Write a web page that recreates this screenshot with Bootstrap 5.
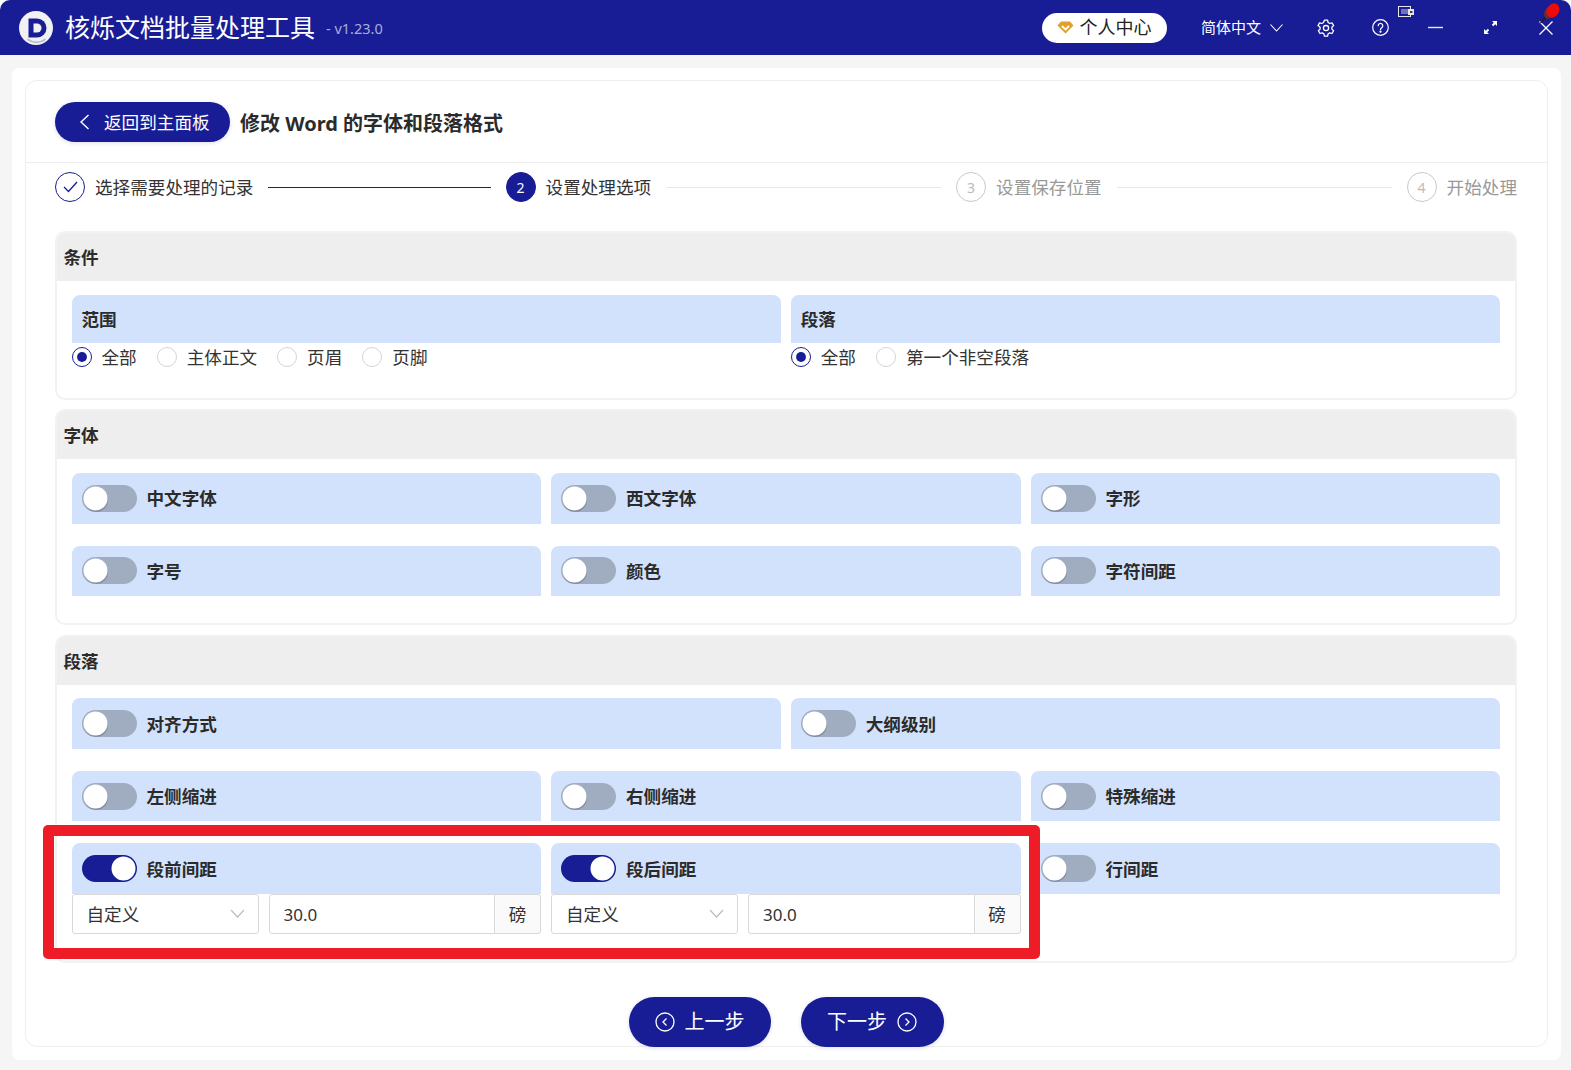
<!DOCTYPE html>
<html lang="zh-CN">
<head>
<meta charset="utf-8">
<title>核烁文档批量处理工具</title>
<link href="https://cdn.jsdelivr.net/npm/bootstrap@5.3.0/dist/css/bootstrap.min.css" rel="stylesheet">
<style>
:root{--navy:#181d96;--sky:#d2e2fc;}
html,body{height:1070px;}
body{position:relative;width:1571px;overflow:hidden;background:#fff;font-family:"Noto Sans","Noto Sans CJK SC",sans-serif;font-size:17.6px;color:#333;}
.app-bar{height:55px;background:var(--navy);color:#fff;border-radius:10px 10px 0 0;padding:0 18px 0 19px;}
.app-title{font-size:25px;margin-left:12px;line-height:55px;}
.app-ver{font-size:14.5px;color:#a9add6;margin-left:11px;padding-top:2px;}
.vip-pill{width:125px;height:30px;background:#fff;color:#222;border-radius:15px;font-size:18px;gap:5px;}
.lang-txt{font-size:15px;margin-left:34px;margin-right:9px;}
.ic-gear{margin-left:34px;}.ic-help{margin-left:37px;}.ic-min{margin-left:39px;}.ic-exp{margin-left:41px;}.ic-x{margin-left:42px;}
.tray-ic{position:absolute;left:1398px;top:6px;}
.pin-ic{position:absolute;left:1539px;top:2px;}
.page-wrap{background:#f5f5f5;height:1015px;padding:13px 10px 0 12px;}
.sheet{background:#fff;height:992px;border-radius:8px;padding:12px 13px 0 13px;}
.inner-sheet{height:967px;border:1px solid #eee;border-radius:12px;}
.top-row{height:82px;border-bottom:1px solid #eee;padding:21px 0 0 29px;}
.btn-navy{background:var(--navy);color:#fff;border:0;border-radius:25px;box-shadow:0 1px 4px rgba(24,29,150,.15);}
.btn-navy:hover{background:var(--navy);color:#fff;}
.btn-home{width:175px;height:40px;font-size:17.6px;gap:14px;padding:0 0 0 24px;}
.page-head{font-size:20px;font-weight:700;color:#2b2b2b;margin-left:10px;height:44px;}
.steps{padding:9px 0 0 29px;margin-right:30px;height:39px;margin-bottom:29px;}
.step-it{flex:1 1 0;}
.step-it.end{flex:0 0 auto;}
.step-no{width:30px;height:30px;border-radius:50%;border:1px solid #c9c9c9;color:#bbb;font-size:14px;flex:none;margin-right:10px;}
.step-no.done{border-color:var(--navy);}
.step-no.now{background:var(--navy);border-color:var(--navy);color:#fff;}
.step-txt{color:#333;white-space:nowrap;}
.step-txt.todo{color:#999;}
.step-line{flex:1;height:1px;background:#e8e8e8;margin:0 15px;}
.step-line.on{background:var(--navy);}
.sect{margin:0 30px 10px 28.5px;border:2px solid #f2f2f2;border-radius:10px;overflow:hidden;}
.sect.first{margin-bottom:9px;}
.sect-head{background:#eee;height:48px;line-height:48px;padding-left:7px;font-weight:700;color:#2b2b2b;}
.sect-body{padding:14px 15px 0;}
.sect-body.snug{padding-top:13px;}
.snug .cell-head{padding-top:1px;}
.tight{--bs-gutter-x:10px;--bs-gutter-y:0;}
.cell-head{background:var(--sky);border-radius:8px 8px 0 0;height:50.5px;padding-left:10px;gap:10px;font-weight:700;color:#2b2b2b;}
.cell-head.short{height:48px;}
.row-gap{margin-top:22px;}
.opts{height:28px;}
.form-check.opt{display:flex;align-items:center;padding:0;margin:0 20px 0 0;min-height:0;}
.form-check.opt .form-check-input{float:none;margin:0 10px 0 0;width:20px;height:20px;border:1px solid #d4d4d4;}
.form-check.opt .form-check-input:checked{background-color:#fff;border-color:var(--navy);background-size:100% 100%;background-image:url("data:image/svg+xml,%3csvg xmlns='http://www.w3.org/2000/svg' viewBox='0 0 20 20'%3e%3ccircle cx='10' cy='10' r='5.5' fill='%23181d96'/%3e%3c/svg%3e");}
.form-check.opt label{color:#333;}
.form-switch.tg{padding:0;margin:0;min-height:0;display:flex;}
.form-switch.tg .form-check-input.tog{float:none;margin:0;width:55px;height:27px;border:0;border-radius:14px;background-color:#a0adc0;background-size:100% 100%;background-position:0 0;background-image:url("data:image/svg+xml,%3csvg xmlns='http://www.w3.org/2000/svg' viewBox='0 0 55 27'%3e%3ccircle cx='14' cy='15' r='12' fill='%23000' fill-opacity='.18'/%3e%3ccircle cx='13.5' cy='13.5' r='12' fill='%23fff'/%3e%3c/svg%3e");}
.form-switch.tg .form-check-input.tog:checked{background-color:var(--navy);background-image:url("data:image/svg+xml,%3csvg xmlns='http://www.w3.org/2000/svg' viewBox='0 0 55 27'%3e%3ccircle cx='41.5' cy='13.5' r='12' fill='%23fff'/%3e%3c/svg%3e");}
.field-row{gap:10px;height:40px;}
.pick{flex:0 0 187px;width:187px;height:40px;border:1px solid #d9d9d9;border-radius:3px;font-size:17.6px;color:#333;padding:2px 30px 0 14px;background-size:15px 9px;background-position:right 13px center;background-image:url("data:image/svg+xml,%3csvg xmlns='http://www.w3.org/2000/svg' viewBox='0 0 15 9'%3e%3cpath d='M1 1l6.5 7L14 1' fill='none' stroke='%23bdbdbd' stroke-width='1.2'/%3e%3c/svg%3e");}
.num-group{flex:1;min-width:0;height:40px;}
.num-group .form-control{height:40px;border:1px solid #d9d9d9;border-radius:3px 0 0 3px;font-size:17px;color:#333;padding:2px 14px 0;}
.num-group .input-group-text{width:47px;justify-content:center;background:#fafafa;border:1px solid #d9d9d9;border-radius:0 3px 3px 0;font-size:17.6px;color:#333;padding:2px 0 0;}
.pb-a{padding-bottom:27px;}.pb-b{padding-bottom:27px;}
.bottom-nav{gap:30px;margin-top:34px;padding-right:1px;}
.btn-step{height:50px;font-size:20px;gap:10px;padding:0;}
.w-a{width:142px;}.w-b{width:143px;}
.red-box{position:absolute;left:43px;top:825px;width:997px;height:134px;border:11px solid #ee1c27;border-radius:5px;pointer-events:none;}
</style>
</head>
<body>
<header class="app-bar d-flex align-items-center">
  <svg width="34" height="34" viewBox="0 0 34 34"><circle cx="17" cy="17" r="17" fill="#f1f1f4"/><path d="M9.500 7.500h8.500a9.500 9.500 0 0 1 0 19h-8.500z" fill="#181d96"/><path d="M14.500 12.500h3.500a4.500 4.500 0 0 1 0 9h-3.500z" fill="#f1f1f4"/><path d="M8 29a16 16 0 0 0 19 0l-1-1.500a14 14 0 0 1-17 0z" fill="#b9bac9"/></svg>
  <span class="app-title">核烁文档批量处理工具</span>
  <span class="app-ver">- v1.23.0</span>
  <div class="ms-auto d-flex align-items-center">
    <div class="vip-pill d-flex align-items-center justify-content-center">
      <svg width="17" height="13" viewBox="0 0 17 13"><path d="M4 .5h9l3.500 4-8 8-8-8z" fill="#e0a02c"/><path d="M5 5l3.500 3.500L12 5" fill="none" stroke="#fff" stroke-width="1.800"/></svg>
      <span>个人中心</span>
    </div>
    <span class="lang-txt">简体中文</span>
    <svg width="13" height="8" viewBox="0 0 13 8"><path d="M.5.5l6 6.500 6-6.500" fill="none" stroke="#fff" stroke-width="1.100"/></svg>
    <svg class="ic-gear" width="18" height="18" viewBox="0 0 18 18" fill="none" stroke="#fff" stroke-width="1.300"><path d="M7.400 1.200h3.200l.5 2.300 1.700 1 2.200-.7 1.600 2.800-1.700 1.600v1.900l1.700 1.600-1.600 2.800-2.200-.7-1.700 1-.5 2.300H7.400l-.5-2.300-1.700-1-2.200.7-1.600-2.800 1.700-1.600V8.200L1 6.600l1.600-2.800 2.200.7 1.700-1z" stroke-linejoin="round"/><circle cx="9" cy="9.100" r="2.600"/></svg>
    <svg class="ic-help" width="17" height="17" viewBox="0 0 17 17" fill="none" stroke="#fff" stroke-width="1.200"><circle cx="8.500" cy="8.500" r="7.800"/><path d="M6.200 6.700a2.300 2.300 0 1 1 3.500 2c-.8.500-1.200.9-1.200 1.900" stroke-linecap="round"/><circle cx="8.500" cy="12.700" r=".5" fill="#fff"/></svg>
    <svg class="ic-min" width="15" height="3" viewBox="0 0 15 3"><path d="M0 1.500h15" stroke="#e8e8f4" stroke-width="1.400"/></svg>
    <svg class="ic-exp" width="13" height="13" viewBox="0 0 13 13" fill="#fff"><path d="M13 0v5l-1.800-1.800-2 2-1.400-1.400 2-2L8 0zM0 13V8l1.800 1.800 2-2 1.400 1.400-2 2L5 13z"/></svg>
    <svg class="ic-x" width="14" height="14" viewBox="0 0 14 14"><path d="M.5.5l13 13M13.500.5l-13 13" stroke="#fff" stroke-width="1.300"/></svg>
  </div>
</header>
<svg class="tray-ic" width="16" height="13" viewBox="0 0 16 13"><rect x=".5" y=".5" width="12" height="10" fill="#181d96" stroke="#e6e6e6"/><rect x="3" y="3" width="7" height="5" fill="#6f74bb"/><rect x="10" y="3" width="6" height="6" fill="#e6e6e6"/><rect x="12" y="5" width="2.500" height="2" fill="#444"/></svg>
<svg class="pin-ic" width="22" height="22" viewBox="0 0 22 22"><path d="M1.500 21l5-5.500" stroke="#2a1a1a" stroke-width="1.500"/><ellipse cx="10" cy="10.500" rx="4.500" ry="6.500" transform="rotate(25 10 10.500)" fill="#6d2a2a"/><ellipse cx="14" cy="8.500" rx="6" ry="7.500" transform="rotate(30 14 8.500)" fill="#ee0a0a"/></svg>

<main class="page-wrap">
  <div class="sheet">
    <div class="inner-sheet">
      <div class="top-row d-flex align-items-start">
        <button type="button" class="btn btn-navy btn-home d-inline-flex align-items-center">
          <svg width="11" height="16" viewBox="0 0 11 16"><path d="M9.500 1L2 8l7.500 7" fill="none" stroke="#fff" stroke-width="1.400"/></svg>
          <span>返回到主面板</span>
        </button>
        <div class="page-head d-flex align-items-center">修改 Word 的字体和段落格式</div>
      </div>

      <div class="steps d-flex">
        <div class="step-it d-flex align-items-center">
          <span class="step-no done d-flex align-items-center justify-content-center"><svg width="15" height="12" viewBox="0 0 15 12"><path d="M1 6l4.500 4.500L14 1" fill="none" stroke="#181d96" stroke-width="1.300"/></svg></span>
          <span class="step-txt">选择需要处理的记录</span><span class="step-line on"></span>
        </div>
        <div class="step-it d-flex align-items-center">
          <span class="step-no now d-flex align-items-center justify-content-center">2</span>
          <span class="step-txt">设置处理选项</span><span class="step-line"></span>
        </div>
        <div class="step-it d-flex align-items-center">
          <span class="step-no d-flex align-items-center justify-content-center">3</span>
          <span class="step-txt todo">设置保存位置</span><span class="step-line"></span>
        </div>
        <div class="step-it end d-flex align-items-center">
          <span class="step-no d-flex align-items-center justify-content-center">4</span>
          <span class="step-txt todo">开始处理</span>
        </div>
      </div>

      <section class="sect first">
        <div class="sect-head">条件</div>
        <div class="sect-body pb-a">
          <div class="row tight">
            <div class="col-6">
              <div class="cell-head short d-flex align-items-center">范围</div>
              <div class="opts d-flex align-items-center">
                <div class="form-check opt"><input class="form-check-input" type="radio" name="r1" id="r11" checked><label class="form-check-label" for="r11">全部</label></div>
                <div class="form-check opt"><input class="form-check-input" type="radio" name="r1" id="r12"><label class="form-check-label" for="r12">主体正文</label></div>
                <div class="form-check opt"><input class="form-check-input" type="radio" name="r1" id="r13"><label class="form-check-label" for="r13">页眉</label></div>
                <div class="form-check opt"><input class="form-check-input" type="radio" name="r1" id="r14"><label class="form-check-label" for="r14">页脚</label></div>
              </div>
            </div>
            <div class="col-6">
              <div class="cell-head short d-flex align-items-center">段落</div>
              <div class="opts d-flex align-items-center">
                <div class="form-check opt"><input class="form-check-input" type="radio" name="r2" id="r21" checked><label class="form-check-label" for="r21">全部</label></div>
                <div class="form-check opt"><input class="form-check-input" type="radio" name="r2" id="r22"><label class="form-check-label" for="r22">第一个非空段落</label></div>
              </div>
            </div>
          </div>
        </div>
      </section>

      <section class="sect">
        <div class="sect-head">字体</div>
        <div class="sect-body pb-b">
          <div class="row tight">
            <div class="col-4"><div class="cell-head d-flex align-items-center"><div class="form-check form-switch tg"><input class="form-check-input tog" type="checkbox" role="switch"></div>中文字体</div></div>
            <div class="col-4"><div class="cell-head d-flex align-items-center"><div class="form-check form-switch tg"><input class="form-check-input tog" type="checkbox" role="switch"></div>西文字体</div></div>
            <div class="col-4"><div class="cell-head d-flex align-items-center"><div class="form-check form-switch tg"><input class="form-check-input tog" type="checkbox" role="switch"></div>字形</div></div>
          </div>
          <div class="row tight row-gap">
            <div class="col-4"><div class="cell-head d-flex align-items-center"><div class="form-check form-switch tg"><input class="form-check-input tog" type="checkbox" role="switch"></div>字号</div></div>
            <div class="col-4"><div class="cell-head d-flex align-items-center"><div class="form-check form-switch tg"><input class="form-check-input tog" type="checkbox" role="switch"></div>颜色</div></div>
            <div class="col-4"><div class="cell-head d-flex align-items-center"><div class="form-check form-switch tg"><input class="form-check-input tog" type="checkbox" role="switch"></div>字符间距</div></div>
          </div>
        </div>
      </section>

      <section class="sect mb-0">
        <div class="sect-head">段落</div>
        <div class="sect-body snug pb-b">
          <div class="row tight">
            <div class="col-6"><div class="cell-head d-flex align-items-center"><div class="form-check form-switch tg"><input class="form-check-input tog" type="checkbox" role="switch"></div>对齐方式</div></div>
            <div class="col-6"><div class="cell-head d-flex align-items-center"><div class="form-check form-switch tg"><input class="form-check-input tog" type="checkbox" role="switch"></div>大纲级别</div></div>
          </div>
          <div class="row tight row-gap">
            <div class="col-4"><div class="cell-head d-flex align-items-center"><div class="form-check form-switch tg"><input class="form-check-input tog" type="checkbox" role="switch"></div>左侧缩进</div></div>
            <div class="col-4"><div class="cell-head d-flex align-items-center"><div class="form-check form-switch tg"><input class="form-check-input tog" type="checkbox" role="switch"></div>右侧缩进</div></div>
            <div class="col-4"><div class="cell-head d-flex align-items-center"><div class="form-check form-switch tg"><input class="form-check-input tog" type="checkbox" role="switch"></div>特殊缩进</div></div>
          </div>
          <div class="row tight row-gap">
            <div class="col-4">
              <div class="cell-head d-flex align-items-center"><div class="form-check form-switch tg"><input class="form-check-input tog" type="checkbox" role="switch" checked></div>段前间距</div>
              <div class="field-row d-flex">
                <select class="form-select pick"><option>自定义</option></select>
                <div class="input-group num-group"><input type="text" class="form-control" value="30.0"><span class="input-group-text">磅</span></div>
              </div>
            </div>
            <div class="col-4">
              <div class="cell-head d-flex align-items-center"><div class="form-check form-switch tg"><input class="form-check-input tog" type="checkbox" role="switch" checked></div>段后间距</div>
              <div class="field-row d-flex">
                <select class="form-select pick"><option>自定义</option></select>
                <div class="input-group num-group"><input type="text" class="form-control" value="30.0"><span class="input-group-text">磅</span></div>
              </div>
            </div>
            <div class="col-4"><div class="cell-head d-flex align-items-center"><div class="form-check form-switch tg"><input class="form-check-input tog" type="checkbox" role="switch"></div>行间距</div></div>
          </div>
        </div>
      </section>

      <div class="bottom-nav d-flex justify-content-center">
        <button type="button" class="btn btn-navy btn-step w-a d-inline-flex align-items-center justify-content-center">
          <svg width="20" height="20" viewBox="0 0 20 20" fill="none" stroke="#fff" stroke-width="1.300"><circle cx="10" cy="10" r="9"/><path d="M11.500 6.500L8 10l3.500 3.500"/></svg><span>上一步</span>
        </button>
        <button type="button" class="btn btn-navy btn-step w-b d-inline-flex align-items-center justify-content-center">
          <span>下一步</span><svg width="20" height="20" viewBox="0 0 20 20" fill="none" stroke="#fff" stroke-width="1.300"><circle cx="10" cy="10" r="9"/><path d="M8.500 6.500L12 10l-3.500 3.500"/></svg>
        </button>
      </div>
    </div>
  </div>
</main>
<div class="red-box"></div>
<script src="https://cdn.jsdelivr.net/npm/bootstrap@5.3.0/dist/js/bootstrap.bundle.min.js"></script>
</body>
</html>
